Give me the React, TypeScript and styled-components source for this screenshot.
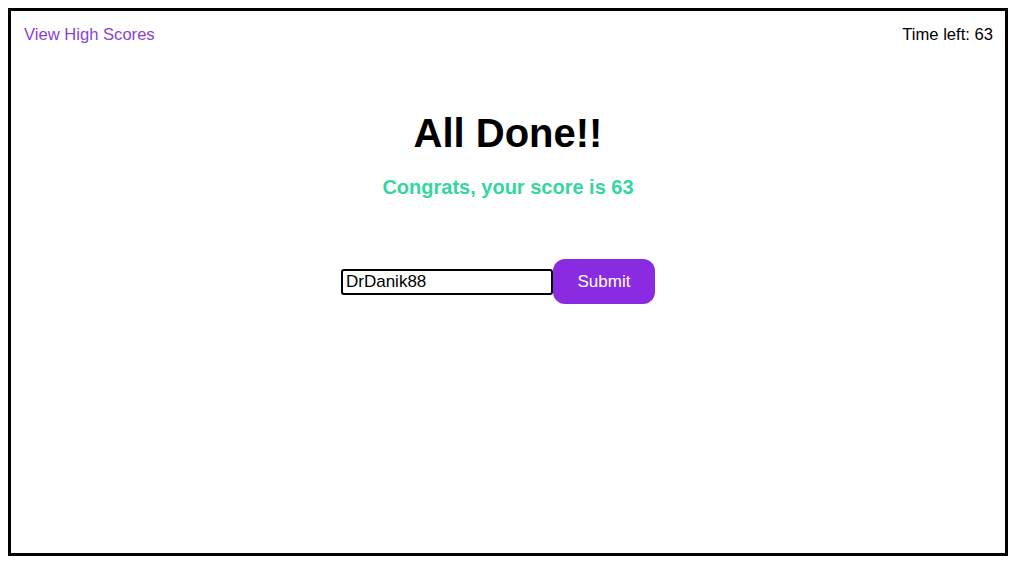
import React, { useState } from "react";
import styled, { createGlobalStyle } from "styled-components";

const GlobalStyle = createGlobalStyle`
    body {
        margin: 8px;
        font-family: "Liberation Sans", Arial, sans-serif;
        background: #ffffff;
    }
`;

const Frame = styled.div`
    box-sizing: border-box;
    width: 1000px;
    height: 548px;
    border: 3px solid #000000;
    display: flex;
    flex-direction: column;
`;

const TopBar = styled.div`
    display: flex;
    flex-direction: row;
    justify-content: space-between;
    align-items: center;
    padding: 14px 12px 0 13px;
    height: 20px;
    font-size: 16.6px;
`;

const ScoresLink = styled.a`
    color: #8a3fd6;
    text-decoration: none;
    cursor: pointer;
`;

const Timer = styled.span`
    color: #000000;
`;

const Main = styled.div`
    display: flex;
    flex-direction: column;
    align-items: center;
    padding-top: 65px;
`;

const Title = styled.h1`
    margin: 0;
    font-size: 40px;
    font-weight: 700;
    line-height: 46px;
    color: #000000;
`;

const Score = styled.h3`
    margin: 19px 0 0 0;
    font-size: 20px;
    font-weight: 700;
    line-height: 24px;
    color: #33d6a0;
`;

const Form = styled.form`
    display: flex;
    flex-direction: row;
    align-items: center;
    margin-top: 60px;
    margin-right: 20px;
`;

const NameInput = styled.input`
    box-sizing: border-box;
    width: 212px;
    height: 26px;
    border: 2px solid #000000;
    border-radius: 3px;
    padding: 0 3px;
    font-family: "Liberation Sans", Arial, sans-serif;
    font-size: 17px;
    color: #000000;
    outline: none;
`;

const SubmitButton = styled.button`
    width: 102px;
    height: 45px;
    border: none;
    border-radius: 12px;
    background: #8a2be2;
    color: #ffffff;
    font-family: "Liberation Sans", Arial, sans-serif;
    font-size: 17px;
    cursor: pointer;
`;

export default function App() {
    const [name, setName] = useState("DrDanik88");

    return (
        <>
            <GlobalStyle />
            <Frame>
                <TopBar>
                    <ScoresLink>View High Scores</ScoresLink>
                    <Timer>Time left: 63</Timer>
                </TopBar>
                <Main>
                    <Title>All Done!!</Title>
                    <Score>Congrats, your score is 63</Score>
                    <Form onSubmit={(e) => e.preventDefault()}>
                        <NameInput value={name} onChange={(e) => setName(e.target.value)} />
                        <SubmitButton type="submit">Submit</SubmitButton>
                    </Form>
                </Main>
            </Frame>
        </>
    );
}
